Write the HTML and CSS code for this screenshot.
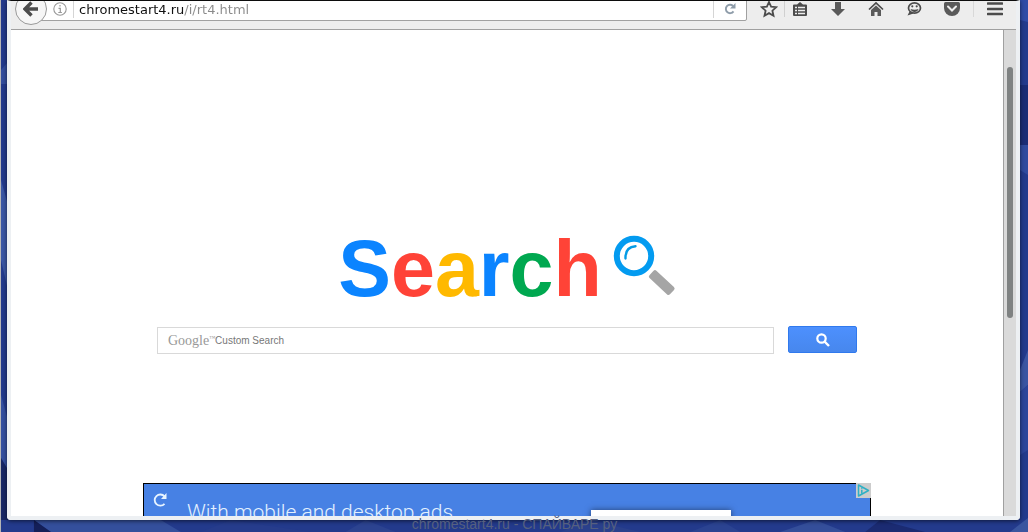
FILE: index.html
```
<!DOCTYPE html>
<html lang="ru">

<head>
	<meta charset="UTF-8" />
	<meta name="viewport" content="width=device-width, initial-scale=1.0" />
	<title>chromestart4.ru</title>
	<link rel="stylesheet" href="styles.css">
</head>

<body>

	<svg class="wallpaper" viewBox="0 0 1028 532" preserveAspectRatio="none" aria-hidden="true">
		<polygon points="0,70 7,62 7,84 0,84" fill="#334d9c" />
		<polygon points="0,180 7,205 7,290 0,260" fill="#3a56a4" />
		<polygon points="0,395 7,420 7,470 0,458" fill="#344f9f" />
		<polygon points="0,458 7,470 7,520 0,520" fill="#182765" />
		<polygon points="1020,0 1028,0 1028,22 1020,20" fill="#2f4ba6" />
		<polygon points="1020,85 1028,85 1028,145 1020,145" fill="#1a2c75" />
		<polygon points="1020,145 1028,145 1028,175 1020,170" fill="#2f4a9e" />
		<polygon points="1020,370 1028,350 1028,385 1020,392" fill="#3a55a2" />
		<polygon points="1020,392 1028,385 1028,450 1020,455" fill="#2c459a" />
		<polygon points="33,520 160,520 180,532 50,532" fill="#344f9c" />
		<polygon points="33,520 50,532 33,532" fill="#141f58" />
		<polygon points="200,532 230,520 310,532" fill="#263c8c" />
		<polygon points="345,532 365,520 395,532" fill="#2c4390" />
		<polygon points="560,532 590,520 640,532" fill="#2a408c" />
		<polygon points="690,532 720,520 740,532" fill="#2b4391" />
		<polygon points="780,532 815,520 845,532" fill="#344e9a" />
		<polygon points="865,532 880,520 925,532" fill="#1b2b72" />
		<polygon points="1010,532 1028,518 1028,532" fill="#3a559f" />
	</svg>

	<div class="window">
		<header class="toolbar">
			<button class="back" type="button" aria-label="Back">
				<svg width="16" height="16" viewBox="0 0 16 16">
					<path d="M8.500 1.500 2 8l6.500 6.500M2.500 8H15" fill="none" stroke="#4c4c4c" stroke-width="3.400" />
				</svg>
			</button>

			<div class="urlbar">
				<svg width="14" height="14" viewBox="0 0 14 14">
					<circle cx="7" cy="7" r="6.200" fill="none" stroke="#999" stroke-width="1.100" />
					<path d="M7 3v1.600M5.500 6.300H7.300V10.500M5.300 10.500h3.600" fill="none" stroke="#999" stroke-width="1.200" />
				</svg>
				<input class="url" type="text" aria-label="Address" value="chromestart4.ru/i/rt4.html">
				<button class="reload" type="button" aria-label="Reload">
					<svg width="12" height="12" viewBox="0 0 12 12">
						<path d="M9.500 8.400A4.200 4.200 0 1 1 9 3" fill="none" stroke="#8f9daa" stroke-width="1.900" />
						<path d="M11.500 0v5.500H6z" fill="#8f9daa" />
					</svg>
				</button>
			</div>

			<button class="star" type="button" aria-label="Bookmark">
				<svg width="18" height="18" viewBox="0 0 18 18">
					<path d="M9 2l2.100 4.700 5.100.5-3.800 3.500 1.100 5L9 13.100l-4.500 2.600 1.100-5L1.800 7.200l5.100-.5z" fill="none" stroke="#4c4c4c" stroke-width="1.800" />
				</svg>
			</button>

			<div class="tools">
				<button type="button" aria-label="Bookmarks list">
					<svg width="16" height="16" viewBox="0 0 16 16">
						<path d="M2 3.500h3L8 1l3 2.500h3q1 0 1 1V14q0 1-1 1H2q-1 0-1-1V4.500q0-1 1-1z" fill="#4c4c4c" />
						<path d="M3 6.500h2M6 6.500h7M3 9.500h2M6 9.500h7M3 12.500h2M6 12.500h7" stroke="#ededed" stroke-width="1.500" />
					</svg>
				</button>
				<button type="button" aria-label="Downloads">
					<svg width="16" height="16" viewBox="0 0 16 16">
						<path d="M5 1h6v7h4l-7 7-7-7h4z" fill="#5a5a5a" />
					</svg>
				</button>
				<button type="button" aria-label="Home">
					<svg width="16" height="16" viewBox="0 0 16 16">
						<path d="M1 8.500 8 2l7 6.500" fill="none" stroke="#4c4c4c" stroke-width="1.700" />
						<path d="M8 4.500l5 4.500v6H9.500v-4h-3v4H3V9z" fill="#5a5a5a" />
					</svg>
				</button>
				<button type="button" aria-label="Chat">
					<svg width="16" height="16" viewBox="0 0 16 16">
						<path d="M3.500 10.500 1.500 14.500l6-2" fill="#4c4c4c" />
						<ellipse cx="8.500" cy="7" rx="6" ry="5.200" fill="#ededed" stroke="#4c4c4c" stroke-width="1.700" />
						<circle cx="6.300" cy="5.300" r="1.100" fill="#4c4c4c" />
						<circle cx="10.700" cy="5.300" r="1.100" fill="#4c4c4c" />
						<path d="M4.500 8q4 1.600 8 0-1 3-4 3t-4-3z" fill="#4c4c4c" />
					</svg>
				</button>
				<button type="button" aria-label="Pocket">
					<svg width="16" height="16" viewBox="0 0 16 16">
						<path d="M1.500 1h13Q16 1 16 2.500V7A8 8 0 0 1 0 7V2.500Q0 1 1.500 1z" fill="#5a5a5a" />
						<path d="M4 5.500l4 4 4-4" fill="none" stroke="#ededed" stroke-width="2" stroke-linecap="round" />
					</svg>
				</button>
			</div>

			<button class="menu" type="button" aria-label="Menu">
				<svg width="16" height="16" viewBox="0 0 16 16">
					<path d="M1 2.500h14M1 8h14M1 13h14" stroke="#4c4c4c" stroke-width="2.600" stroke-linecap="round" />
				</svg>
			</button>
		</header>

		<div class="viewport">
			<main class="page">
				<h1 class="logo">
					<span class="letters"><span class="blue">S</span><span class="red">e</span><span class="yellow">a</span><span class="blue">r</span><span class="green">c</span><span class="red">h</span></span>
					<svg width="64" height="64" viewBox="0 0 64 64" aria-hidden="true">
						<circle cx="22" cy="22" r="17.200" fill="#fff" stroke="#039bf0" stroke-width="6" />
						<path d="M13.500 24.500Q13 13 23.500 12.300" fill="none" stroke="#039be5" stroke-width="2.400" stroke-linecap="round" />
						<rect x="-5" y="0" width="10" height="28" rx="2" fill="#a5a5a5" transform="translate(39.500 39) rotate(-47)" />
					</svg>
				</h1>

				<form class="search">
					<div class="field">
						<label for="q">Google<sup>™</sup></label>
						<input id="q" type="text" placeholder="Custom Search">
					</div>
					<button class="go" type="submit" aria-label="Search">
						<svg width="14" height="14" viewBox="0 0 14 14">
							<circle cx="5.500" cy="5.500" r="4.200" fill="none" stroke="#fff" stroke-width="2.200" />
							<path d="M8.500 8.500l4.500 4.500" stroke="#fff" stroke-width="2.400" />
						</svg>
					</button>
				</form>

				<section class="ad">
					<svg class="replay" width="14" height="14" viewBox="0 0 14 14">
						<path d="M11.500 10.800A5.600 5.600 0 1 1 11.500 3.400" fill="none" stroke="#e8f4ff" stroke-width="1.800" />
						<path d="M13.500 0v6H8z" fill="#e8f4ff" />
					</svg>
					<p>With mobile and desktop ads</p>
					<div class="card"></div>
					<a class="choices" href="#" aria-label="AdChoices">
						<svg width="15" height="15" viewBox="0 0 15 15">
							<path d="M2.500 2v11l10-5.500z" fill="none" stroke="#2fb0c4" stroke-width="1.500" stroke-linejoin="round" />
							<path d="M5.800 4.500v1.200M5.800 6.800v4" stroke="#2fb0c4" stroke-width="1.500" />
						</svg>
					</a>
				</section>
			</main>
			<div class="scrollbar">
				<div class="thumb"></div>
			</div>
		</div>
	</div>

	<footer class="caption">chromestart4.ru - СПАЙВАРЕ ру</footer>

</body>

</html>
```
FILE: styles.css
```
* {
	box-sizing: border-box;
	margin: 0;
	padding: 0;
}

body {
	position: relative;
	display: flex;
	flex-direction: column;
	height: 100vh;
	overflow: hidden;
	background: #233a8c;
	border-left: 1px solid #b5b5b5;
	font-family: "Liberation Sans", Arial, sans-serif;
}

button {
	display: flex;
	align-items: center;
	justify-content: center;
	flex-shrink: 0;
	background: none;
	border: none;
	cursor: pointer;
}

input {
	border: none;
	outline: none;
	background: none;
	min-width: 0;
}

svg {
	display: block;
	flex-shrink: 0;
}

.wallpaper {
	position: absolute;
	inset: 0;
	width: 100%;
	height: 100%;
}

.window {
	position: relative;
	flex: 1;
	min-height: 0;
	display: flex;
	flex-direction: column;
	margin: 0 8px 0 6px;
	border: 4px solid #edf0f3;
	border-top: 1px solid #0c0c0c;
	border-radius: 0 0 4px 4px;
	box-shadow: 0 1px 4px rgba(0, 0, 0, 0.6);
	overflow: hidden;
}

/* toolbar, cut by the top edge */
.toolbar {
	display: flex;
	align-items: center;
	flex-shrink: 0;
	height: 29px;
	padding: 0 0 12px 4px;
	background: #ededed;
	border-bottom: 1px solid #a0a0a0;
	overflow: hidden;
}

.back {
	position: relative;
	width: 32px;
	height: 32px;
	background: #f6f6f6;
	border: 1px solid #999;
	border-radius: 50%;
}

.urlbar {
	flex: 1;
	display: flex;
	align-items: center;
	height: 24px;
	margin-left: -8px;
	padding-left: 13px;
	background: #fff;
	border: 1px solid #a0a0a0;
	border-radius: 0 2px 2px 0;
}

.url {
	flex: 1;
	height: 18px;
	margin-left: 6px;
	padding-left: 5px;
	border-left: 1px solid #d5d5d5;
	font-family: "DejaVu Sans", sans-serif;
	font-size: 13px;
	/* host is black, path is grey */
	background: linear-gradient(to right, #111 110px, #8a8a8a 110px);
	-webkit-background-clip: text;
	background-clip: text;
	color: transparent;
}

.reload {
	width: 33px;
	height: 18px;
	border-left: 1px solid #d5d5d5;
}

.star {
	width: 30px;
	margin-left: 7px;
}

.tools {
	display: flex;
	align-items: center;
	gap: 22px;
	padding: 0 13px 0 7px;
	border-left: 1px solid #d0d0d0;
	border-right: 1px solid #d8d8d8;
}

.menu {
	width: 42px;
}

.viewport {
	flex: 1;
	min-height: 0;
	display: flex;
	background: #fff;
}

.page {
	flex: 1;
	display: flex;
	flex-direction: column;
	align-items: center;
	padding-top: 204px;
	overflow: hidden;
}

.scrollbar {
	width: 13px;
	padding: 37px 3px 0;
	background: #dadada;
	border-left: 1px solid #a0a0a0;
}

.thumb {
	height: 251px;
	width: 6px;
	background: #7f8282;
	border-radius: 3px;
}

.logo {
	display: flex;
	gap: 10px;
	height: 68px;
	font-size: 79px;
	line-height: 70px;
}

.blue {
	color: #0b84ff;
}

.red {
	color: #ff4337;
}

.yellow {
	color: #ffb900;
}

.green {
	color: #00a850;
}

.search {
	display: flex;
	gap: 14px;
	width: 700px;
	max-width: 100%;
	margin-top: 24px;
}

.field {
	flex: 1;
	display: flex;
	align-items: center;
	height: 27px;
	margin-top: 1px;
	padding-left: 10px;
	border: 1px solid #d9d9d9;
}

.field label {
	color: #999;
	font-family: "Liberation Serif", serif;
	font-size: 14px;
}

.field sup {
	font-size: 6px;
	vertical-align: 5px;
}

.field input {
	flex: 1;
	font-family: "Liberation Sans", Arial, sans-serif;
	font-size: 10px;
}

.field input::placeholder {
	color: #777;
}

.go {
	width: 69px;
	height: 27px;
	background: linear-gradient(#4d90fe, #4787ed);
	border: 1px solid #3079ed;
	border-radius: 2px;
}

.ad {
	position: relative;
	display: flex;
	flex-shrink: 0;
	width: 728px;
	height: 90px;
	margin-top: 129px;
	padding: 9px;
	background: #4781e4;
	border: 1px solid #000;
}

.ad p {
	margin: 6px 0 0 20px;
	color: #e3f1ff;
	font-family: Roboto, sans-serif;
	font-size: 21px;
	font-weight: 300;
	line-height: 26px;
}

.card {
	width: 140px;
	height: 60px;
	margin: 17px 130px 0 auto;
	background: #fff;
	box-shadow: 0 0 6px rgba(0, 0, 0, 0.5);
}

.choices {
	position: absolute;
	top: -1px;
	right: -1px;
	background: #ccc;
}

.caption {
	position: relative;
	flex-shrink: 0;
	height: 12px;
	color: #56607f;
	font-size: 14px;
	line-height: 9px;
	text-align: center;
}
```
